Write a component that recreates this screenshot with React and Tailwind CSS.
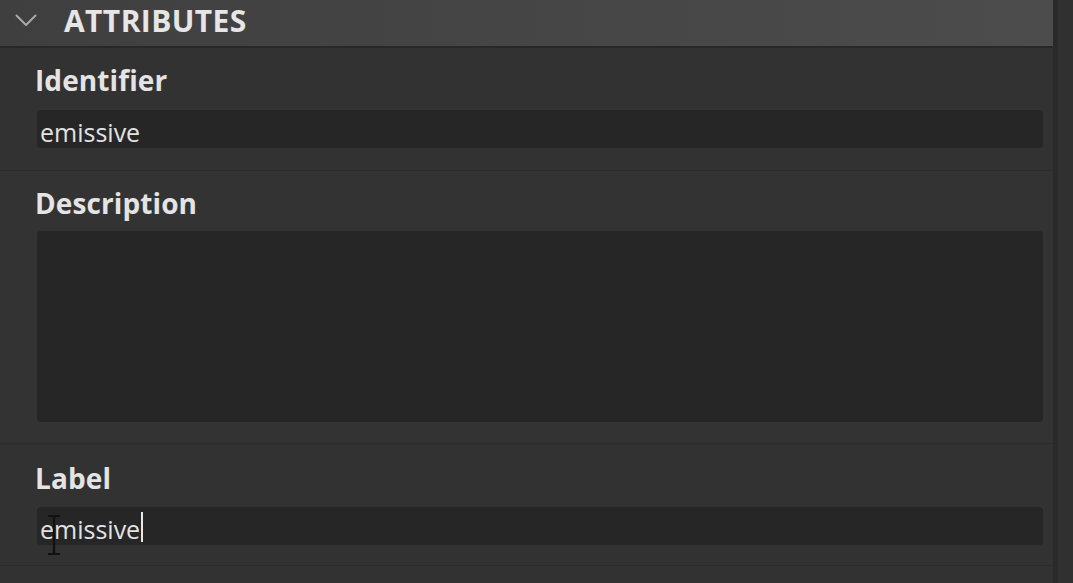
import React from "react";

const labelCls =
  "text-[28px] leading-[32px] font-bold text-[#e4e4e4] tracking-[0.1px]";
const fieldCls =
  "h-[38px] rounded-[4px] bg-[#262626] pl-[3px] pt-[7px] text-[25px] leading-[30px] text-[#e2e2e2]";

function Chevron() {
  return (
    <svg width="22" height="13" viewBox="0 0 22 13" fill="none">
      <path d="M1.5 1.5 L11 11 L20.5 1.5" stroke="#a9a9a9" strokeWidth="2" strokeLinecap="round" strokeLinejoin="round" />
    </svg>
  );
}

function IBeam() {
  return (
    <svg width="16" height="42" viewBox="0 0 16 42" fill="none">
      <path d="M2 2 H6 Q8 2 8 4 Q8 2 10 2 H14 M8 4 V38 Q8 40 6 40 H2 M8 38 Q8 40 10 40 H14" stroke="#111" strokeWidth="2.2" />
    </svg>
  );
}

export default function App() {
  return (
    <div
      className="flex h-[583px] w-[1073px] overflow-hidden bg-[#323232]"
      style={{ fontFamily: '"Open Sans", "Noto Sans", sans-serif' }}
    >
      {/* panel */}
      <div className="flex flex-1 flex-col">
        {/* header */}
        <div className="flex h-[48px] shrink-0 items-center border-b-2 border-[#282828] bg-gradient-to-r from-[#3f3f3f] to-[#4c4c4c]">
          <div className="ml-[15px] mt-[-5px]">
            <Chevron />
          </div>
          <span className="ml-[27px] mt-[-5px] text-[30px] font-bold leading-[34px] tracking-[0.4px] text-[#e6e6e6]">
            ATTRIBUTES
          </span>
        </div>

        {/* identifier */}
        <div className="h-[122px] shrink-0 pl-[37px] pr-[10px] pt-[16px]">
          <div className={`${labelCls} -ml-[2px]`}>Identifier</div>
          <div className={`${fieldCls} mt-[14px]`}>emissive</div>
        </div>

        {/* description */}
        <div className="h-[273px] shrink-0 border-t border-[#2b2b2b] bg-[#333333] pl-[37px] pr-[10px] pt-[16px]">
          <div className={`${labelCls} -ml-[2px]`}>Description</div>
          <div className="mt-[12px] h-[191px] rounded-[4px] bg-[#262626]"></div>
        </div>

        {/* label */}
        <div className="h-[122px] shrink-0 border-t border-[#2b2b2b] pl-[37px] pr-[10px] pt-[18px]">
          <div className={`${labelCls} -ml-[2px]`}>Label</div>
          <div className={`${fieldCls} relative mt-[13px] flex`}>
            <span>emissive</span>
            <span className="ml-[1px] mt-[-2px] h-[30px] w-[2px] bg-[#e8e8e8]"></span>
            <div className="absolute left-[9px] top-[7px]">
              <IBeam />
            </div>
          </div>
        </div>

        <div className="flex-1 border-t border-[#2b2b2b]"></div>
      </div>

      {/* scrollbar */}
      <div className="w-[20px] shrink-0 border-l-[5px] border-[#2a2a2a] bg-[#303030]"></div>
    </div>
  );
}
